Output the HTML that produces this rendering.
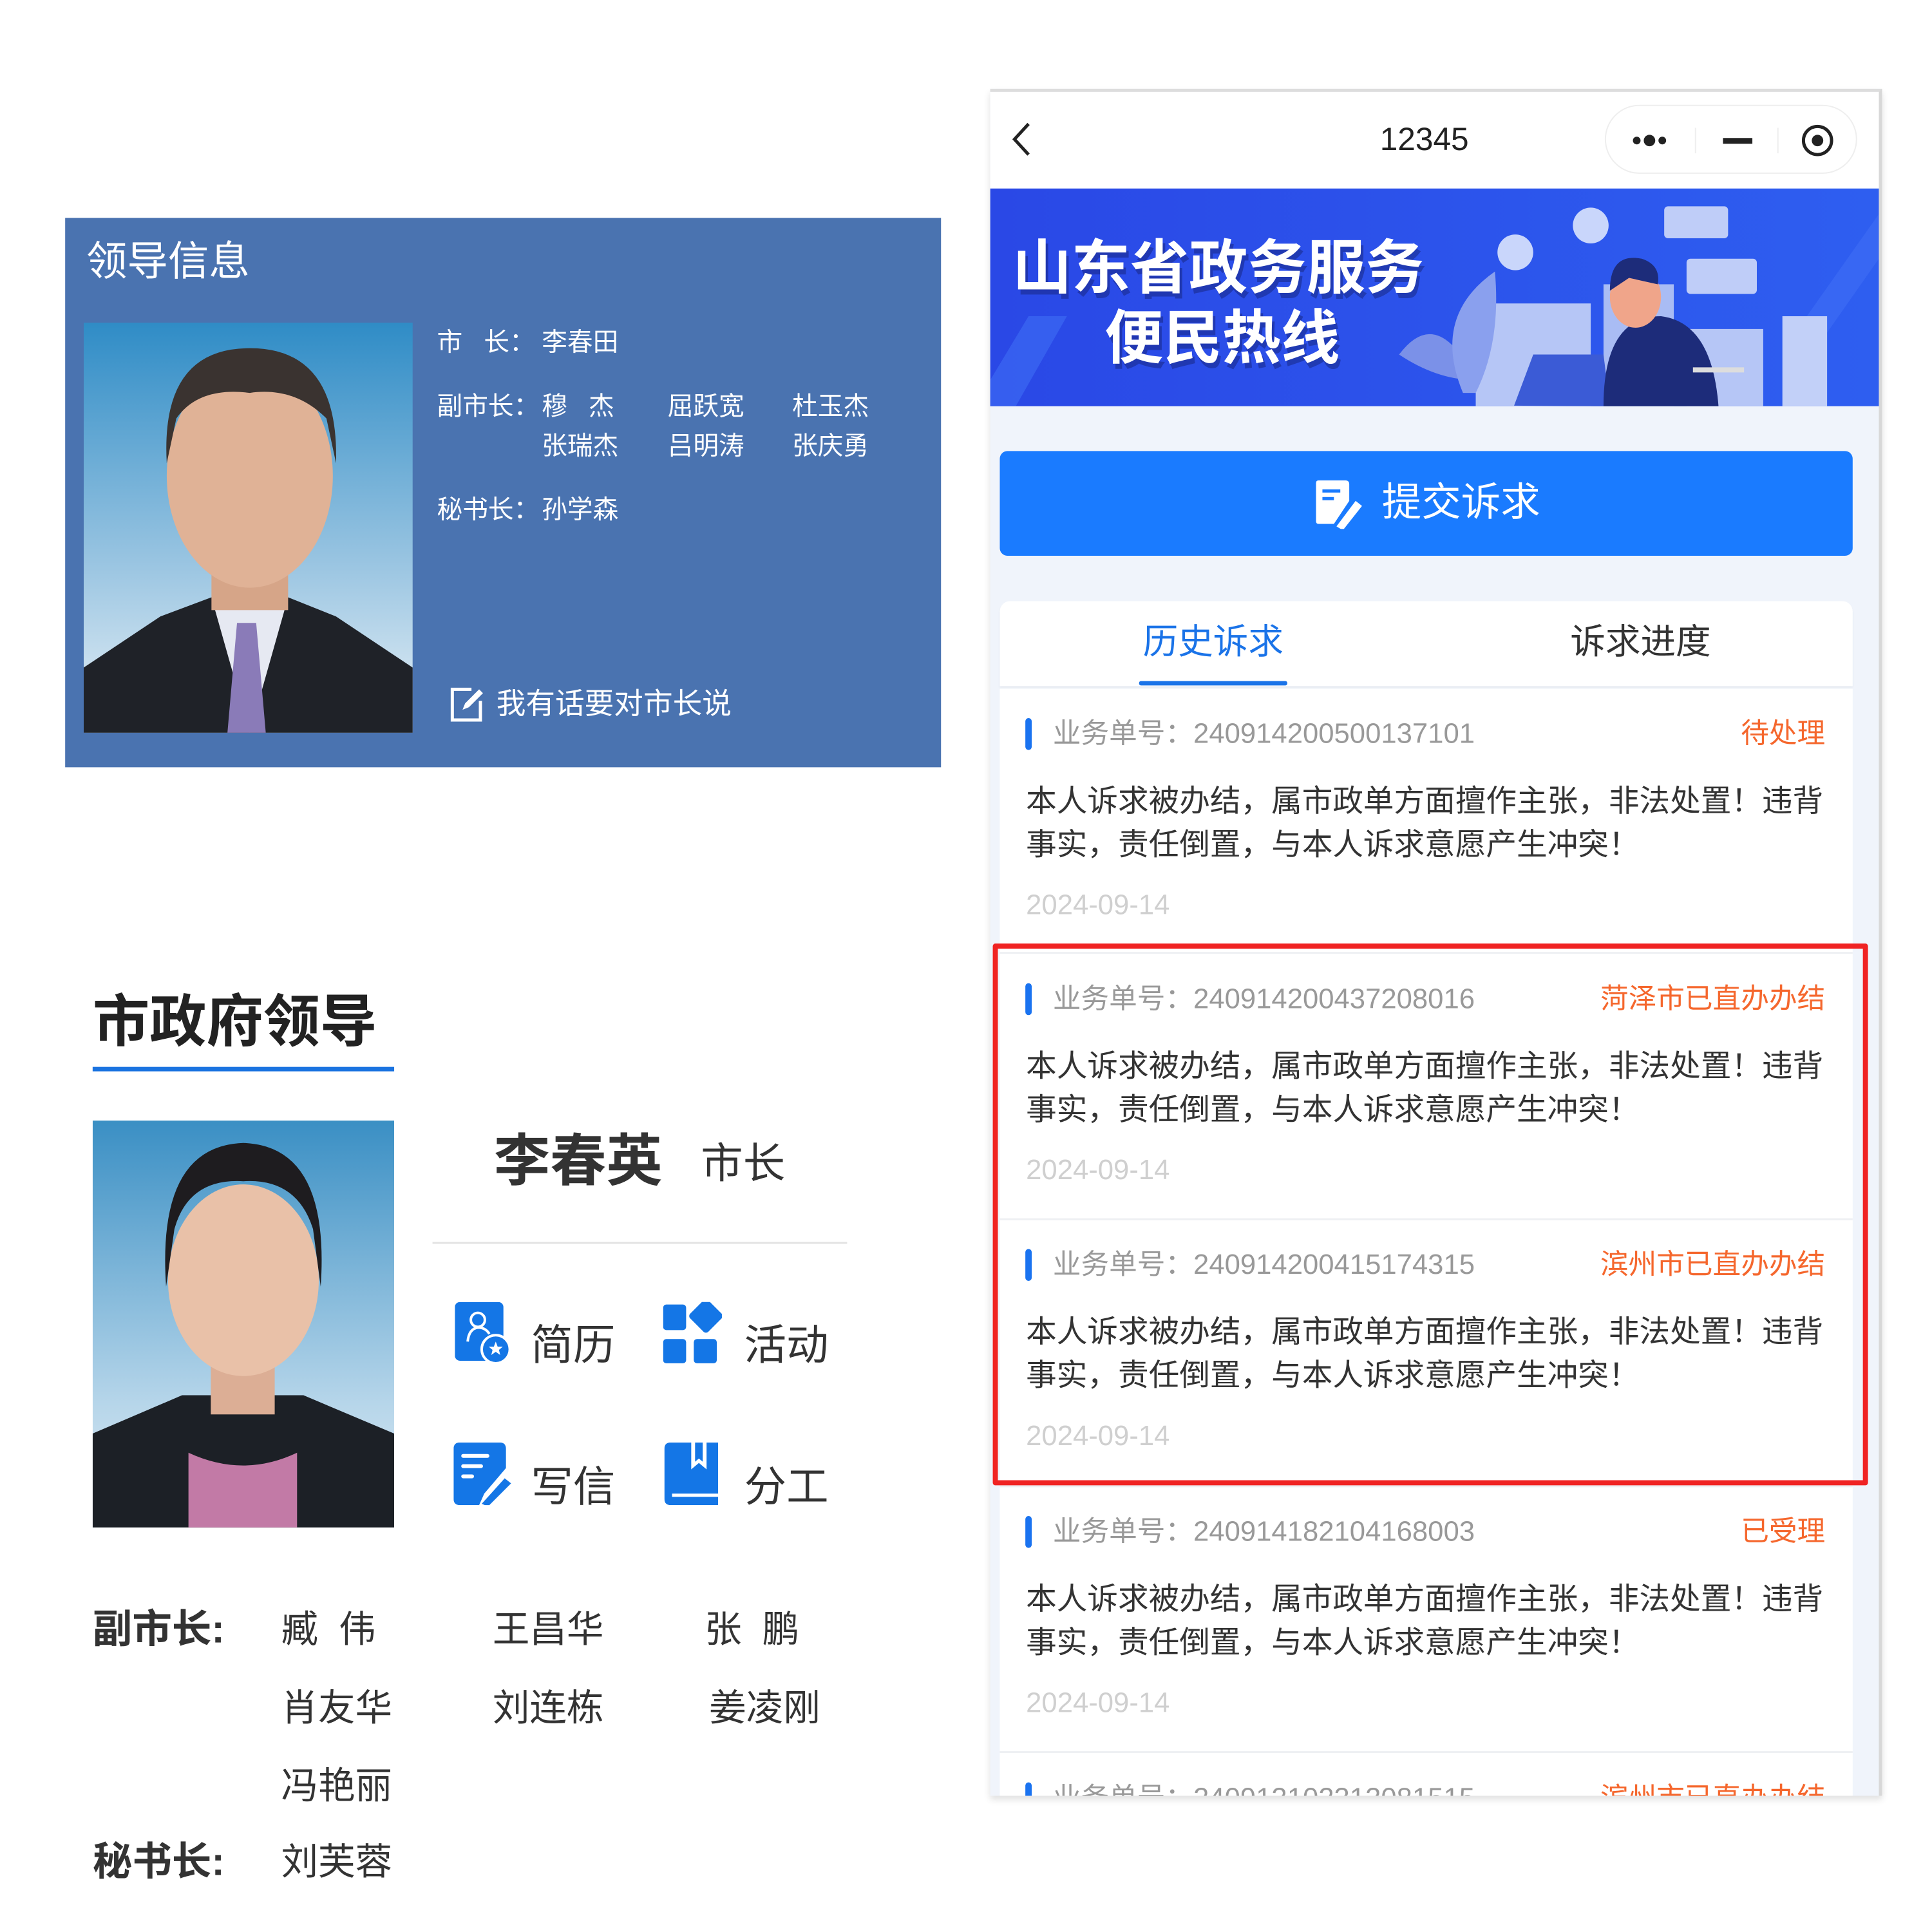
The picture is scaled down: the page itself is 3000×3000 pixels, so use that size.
<!DOCTYPE html>
<html><head><meta charset="utf-8">
<style>
*{margin:0;padding:0;box-sizing:border-box}
body{width:3000px;height:3000px;background:#fff;position:relative;overflow:hidden;font-family:"Liberation Sans","Noto Sans CJK SC",sans-serif}
#root{position:absolute;left:0;top:0;width:3000px;height:3000px;transform:scale(0.992);transform-origin:0 0}
.a{position:absolute;white-space:nowrap;line-height:1}
.w{color:#fff}
.item-h{color:#999;font-size:44px}
.st{color:#f5672d;font-size:44px}
.body{color:#333;font-size:48px;line-height:68px}
.dt{color:#cfcfcf;font-size:44px}
.bar{position:absolute;width:10px;height:50px;background:#1a73f0;border-radius:5px}
</style></head><body><div id="root">

<!-- left blue box -->
<div class="a" style="left:102px;top:341px;width:1371px;height:860px;background:#4a73b0"></div>
<div class="a w" style="left:135px;top:377px;font-size:64px">领导信息</div>
<svg class="a" style="left:131px;top:505px" width="515" height="642" viewBox="0 0 515 642">
<defs><linearGradient id="g1" x1="0" y1="0" x2="0" y2="1"><stop offset="0" stop-color="#2f8cc6"/><stop offset="0.6" stop-color="#9cc6e2"/><stop offset="1" stop-color="#e8f1f7"/></linearGradient></defs>
<rect width="515" height="642" fill="url(#g1)"/>
<path d="M0 540 L120 460 L200 430 L320 430 L395 460 L515 540 L515 642 L0 642Z" fill="#1f2228"/>
<path d="M200 430 L260 642 L320 430Z" fill="#e6e9f2"/>
<path d="M240 470 L270 470 L285 642 L225 642Z" fill="#8a7bb8"/>
<rect x="200" y="330" width="120" height="120" fill="#d6a588"/>
<ellipse cx="260" cy="240" rx="130" ry="175" fill="#e0b296"/>
<path d="M130 220 Q120 40 260 40 Q400 40 395 220 L380 150 Q330 100 260 110 Q180 100 145 150Z" fill="#3a3330"/>
</svg>
<div class="a w" style="left:684px;top:516px;font-size:40px">市&nbsp;&nbsp;&nbsp;长：</div>
<div class="a w" style="left:848px;top:516px;font-size:40px">李春田</div>
<div class="a w" style="left:684px;top:616px;font-size:40px">副市长：</div>
<div class="a w" style="left:848px;top:616px;font-size:40px">穆&nbsp;&nbsp;&nbsp;杰</div>
<div class="a w" style="left:1045px;top:616px;font-size:40px">屈跃宽</div>
<div class="a w" style="left:1240px;top:616px;font-size:40px">杜玉杰</div>
<div class="a w" style="left:848px;top:678px;font-size:40px">张瑞杰</div>
<div class="a w" style="left:1045px;top:678px;font-size:40px">吕明涛</div>
<div class="a w" style="left:1240px;top:678px;font-size:40px">张庆勇</div>
<div class="a w" style="left:684px;top:778px;font-size:40px">秘书长：</div>
<div class="a w" style="left:848px;top:778px;font-size:40px">孙学森</div>
<svg class="a" style="left:700px;top:1071px" width="62" height="62" viewBox="0 0 62 62"><path d="M38 8 H8 V56 H52 V26" fill="none" stroke="#fff" stroke-width="5"/><path d="M24 40 L28 30 L50 8 L56 14 L34 36Z" fill="#fff"/></svg>
<div class="a w" style="left:777px;top:1078px;font-size:46px">我有话要对市长说</div>

<!-- bottom-left -->
<div class="a" style="left:145px;top:1555px;font-size:89px;font-weight:bold;color:#222">市政府领导</div>
<div class="a" style="left:145px;top:1670px;width:472px;height:7px;background:#1a73e0"></div>
<svg class="a" style="left:145px;top:1754px" width="472" height="637" viewBox="0 0 472 637">
<defs><linearGradient id="g2" x1="0" y1="0" x2="0" y2="1"><stop offset="0" stop-color="#3a8fc4"/><stop offset="0.7" stop-color="#b7d6ea"/><stop offset="1" stop-color="#dfeaf3"/></linearGradient></defs>
<rect width="472" height="637" fill="url(#g2)"/>
<path d="M0 490 L140 430 L330 430 L472 490 L472 637 L0 637Z" fill="#1c2026"/>
<path d="M150 520 Q236 560 320 520 L320 637 L150 637Z" fill="#c27aa6"/>
<rect x="185" y="360" width="100" height="100" fill="#dcae95"/>
<ellipse cx="236" cy="250" rx="118" ry="150" fill="#e9c1a8"/>
<path d="M115 260 Q100 40 236 35 Q372 40 357 260 L345 170 Q320 90 236 95 Q150 90 128 170Z" fill="#1e1c1f"/>
</svg>
<div class="a" style="left:773px;top:1774px;font-size:88px;font-weight:bold;color:#333">李春英</div>
<div class="a" style="left:1097px;top:1788px;font-size:66px;color:#333">市长</div>
<div class="a" style="left:677px;top:1944px;width:649px;height:3px;background:#e3e3e3"></div>
<!-- icons -->
<svg class="a" style="left:712px;top:2038px" width="88" height="98" viewBox="0 0 88 98"><rect x="0" y="0" width="76" height="92" rx="8" fill="#1476e6"/><circle cx="36" cy="28" r="11" fill="none" stroke="#fff" stroke-width="4"/><path d="M20 62 Q22 42 36 40 Q48 40 54 50" fill="none" stroke="#fff" stroke-width="4"/><circle cx="64" cy="74" r="22" fill="#1476e6" stroke="#fff" stroke-width="4"/><path d="M64 62 L67 70 L75 70 L69 75 L71 83 L64 78 L57 83 L59 75 L53 70 L61 70Z" fill="#fff"/></svg>
<div class="a" style="left:831px;top:2072px;font-size:66px;color:#333">简历</div>
<svg class="a" style="left:1038px;top:2038px" width="92" height="98" viewBox="0 0 92 98"><rect x="0" y="4" width="36" height="40" rx="5" fill="#1476e6"/><rect x="47" y="2" width="40" height="40" rx="5" transform="rotate(45 67 22)" fill="#1476e6"/><rect x="0" y="58" width="36" height="38" rx="5" fill="#1476e6"/><rect x="48" y="58" width="36" height="38" rx="5" fill="#1476e6"/></svg>
<div class="a" style="left:1165px;top:2072px;font-size:66px;color:#333">活动</div>
<svg class="a" style="left:710px;top:2258px" width="92" height="98" viewBox="0 0 92 98"><path d="M10 0 H72 Q82 0 82 10 V40 L48 80 L40 98 H10 Q0 98 0 88 V10 Q0 0 10 0Z" fill="#1476e6"/><rect x="12" y="18" width="44" height="6" rx="3" fill="#fff"/><rect x="12" y="34" width="34" height="6" rx="3" fill="#fff"/><rect x="12" y="50" width="20" height="6" rx="3" fill="#fff"/><path d="M44 96 L80 56 L90 64 L54 100Z" fill="#1476e6"/></svg>
<div class="a" style="left:831px;top:2294px;font-size:66px;color:#333">写信</div>
<svg class="a" style="left:1040px;top:2258px" width="90" height="98" viewBox="0 0 90 98"><path d="M10 0 H42 V42 L54 32 L66 42 V0 H84 V98 H10 Q0 98 0 88 V10 Q0 0 10 0Z" fill="#1476e6"/><path d="M48 0 H60 V30 L54 25 L48 30Z" fill="#1476e6"/><rect x="12" y="80" width="72" height="5" fill="#fff"/></svg>
<div class="a" style="left:1165px;top:2294px;font-size:66px;color:#333">分工</div>

<div class="a" style="left:145px;top:2520px;font-size:62px;font-weight:bold;color:#333">副市长:</div>
<div class="a" style="left:440px;top:2522px;font-size:58px;color:#333">臧&nbsp;&nbsp;伟</div>
<div class="a" style="left:771px;top:2522px;font-size:58px;color:#333">王昌华</div>
<div class="a" style="left:1103px;top:2522px;font-size:58px;color:#333">张&nbsp;&nbsp;鹏</div>
<div class="a" style="left:440px;top:2645px;font-size:58px;color:#333">肖友华</div>
<div class="a" style="left:771px;top:2645px;font-size:58px;color:#333">刘连栋</div>
<div class="a" style="left:1110px;top:2645px;font-size:58px;color:#333">姜凌刚</div>
<div class="a" style="left:440px;top:2767px;font-size:58px;color:#333">冯艳丽</div>
<div class="a" style="left:145px;top:2884px;font-size:62px;font-weight:bold;color:#333">秘书长:</div>
<div class="a" style="left:440px;top:2886px;font-size:58px;color:#333">刘芙蓉</div>

<!-- phone -->
<div class="a" style="left:1550px;top:139px;width:1396px;height:2672px;background:#f0f4fb;border-top:5px solid #ddd;border-right:5px solid #d8d8d8;box-shadow:0 6px 10px rgba(0,0,0,0.12)"></div>
<div class="a" style="left:1550px;top:144px;width:1391px;height:151px;background:#fff"></div>
<svg class="a" style="left:1582px;top:190px" width="36" height="56" viewBox="0 0 36 56"><path d="M28 4 L6 28 L28 52" fill="none" stroke="#222" stroke-width="5"/></svg>
<div class="a" style="left:2160px;top:193px;font-size:50px;color:#222">12345</div>
<div class="a" style="left:2512px;top:164px;width:395px;height:108px;border:2px solid #eee;border-radius:54px;background:#fff"></div>
<svg class="a" style="left:2552px;top:195px" width="340" height="50" viewBox="0 0 340 50"><circle cx="10" cy="25" r="6" fill="#222"/><circle cx="30" cy="25" r="9" fill="#222"/><circle cx="50" cy="25" r="6" fill="#222"/><rect x="101" y="5" width="2" height="40" fill="#eee"/><rect x="145" y="21" width="46" height="9" fill="#222"/><rect x="230" y="5" width="2" height="40" fill="#eee"/><circle cx="293" cy="25" r="22" fill="none" stroke="#222" stroke-width="5"/><circle cx="293" cy="25" r="9" fill="#222"/></svg>
<!-- banner -->
<svg class="a" style="left:1550px;top:295px" width="1391" height="341" viewBox="0 0 1391 341" preserveAspectRatio="none">
<defs><linearGradient id="g3" x1="0" y1="0" x2="1" y2="0"><stop offset="0" stop-color="#2a48e6"/><stop offset="1" stop-color="#2e5ef0"/></linearGradient></defs>
<rect width="1391" height="341" fill="url(#g3)"/>
<path d="M0 300 L60 200 L120 200 L40 341 L0 341Z" fill="#3f6ef5" opacity="0.6"/>
<path d="M1250 240 L1391 40 L1391 110 L1300 240Z" fill="#3f6ef5" opacity="0.6"/>
<rect x="760" y="180" width="180" height="161" fill="#b6c6f6"/>
<rect x="960" y="150" width="110" height="191" fill="#a9bcf4"/>
<rect x="1090" y="220" width="120" height="121" fill="#b6c6f6"/>
<rect x="1240" y="200" width="70" height="141" fill="#c2d0f8"/>
<circle cx="822" cy="100" r="28" fill="#c9d6fb"/>
<circle cx="940" cy="58" r="28" fill="#c9d6fb"/>
<rect x="1055" y="28" width="100" height="50" rx="6" fill="#bfcdf8"/>
<rect x="1090" y="110" width="110" height="55" rx="6" fill="#bfcdf8"/>
<path d="M640 260 Q700 180 760 300 Q700 300 640 260Z" fill="#7b91e8"/>
<path d="M740 320 Q690 200 790 130 Q800 240 760 320Z" fill="#8aa0ee"/>
<path d="M820 340 L850 260 L960 260 L970 341Z" fill="#3b5bd6"/>
<path d="M960 341 Q960 200 1050 200 Q1130 210 1140 341Z" fill="#1d2c7a"/>
<ellipse cx="1010" cy="170" rx="40" ry="48" fill="#f0a58a"/>
<path d="M970 160 Q970 100 1020 110 Q1050 120 1045 150 L1000 140Z" fill="#1d2c7a"/>
<rect x="1100" y="280" width="80" height="8" fill="#ddd"/>
</svg>
<div class="a" style="left:1585px;top:374px;font-size:92px;font-weight:bold;color:#fff;text-shadow:4px 8px 0 rgba(20,30,110,0.45)">山东省政务服务</div>
<div class="a" style="left:1729px;top:484px;font-size:92px;font-weight:bold;color:#fff;text-shadow:4px 8px 0 rgba(20,30,110,0.45)">便民热线</div>
<!-- button -->
<div class="a" style="left:1565px;top:706px;width:1335px;height:164px;background:#1a7bff;border-radius:12px"></div>
<svg class="a" style="left:2058px;top:748px" width="80" height="80" viewBox="0 0 80 80"><path d="M6 4 H48 Q54 4 54 10 V36 L30 72 H6 Q2 72 2 68 V8 Q2 4 6 4Z" fill="#fff"/><rect x="12" y="18" width="28" height="5" fill="#1a7bff"/><rect x="12" y="30" width="18" height="5" fill="#1a7bff"/><path d="M34 76 L64 36 L74 44 L44 82Z" fill="#fff"/></svg>
<div class="a w" style="left:2163px;top:756px;font-size:62px">提交诉求</div>
<!-- tabs -->
<div class="a" style="left:1565px;top:941px;width:1335px;height:133px;background:#fff;border-radius:16px 16px 0 0;box-shadow:0 3px 4px rgba(0,0,0,0.04)"></div>
<div class="a" style="left:1789px;top:977px;font-size:55px;color:#1a73e8">历史诉求</div>
<div class="a" style="left:1783px;top:1066px;width:232px;height:7px;background:#1a73e8;border-radius:3px"></div>
<div class="a" style="left:2458px;top:977px;font-size:55px;color:#333">诉求进度</div>

<!-- items -->
<div class="a" style="left:1565px;top:1078px;width:1335px;height:1733px;background:#fff"></div>
<div class="a" style="left:1565px;top:1490px;width:1335px;height:3px;background:#eef0f3"></div>
<div class="a" style="left:1565px;top:1907px;width:1335px;height:3px;background:#eef0f3"></div>
<div class="a" style="left:1565px;top:2325px;width:1335px;height:3px;background:#eef0f3"></div>
<div class="a" style="left:1565px;top:2741px;width:1335px;height:3px;background:#eef0f3"></div>

<div class="bar" style="left:1605px;top:1124px"></div>
<div class="a item-h" style="left:1648px;top:1127px">业务单号：240914200500137101</div>
<div class="a st" style="left:2725px;top:1127px">待处理</div>
<div class="a body" style="left:1606px;top:1221px">本人诉求被办结，属市政单方面擅作主张，非法处置！违背<br>事实，责任倒置，与本人诉求意愿产生冲突！</div>
<div class="a dt" style="left:1606px;top:1395px">2024-09-14</div>

<div class="bar" style="left:1605px;top:1539px"></div>
<div class="a item-h" style="left:1648px;top:1542px">业务单号：240914200437208016</div>
<div class="a st" style="left:2505px;top:1542px">菏泽市已直办办结</div>
<div class="a body" style="left:1606px;top:1636px">本人诉求被办结，属市政单方面擅作主张，非法处置！违背<br>事实，责任倒置，与本人诉求意愿产生冲突！</div>
<div class="a dt" style="left:1606px;top:1810px">2024-09-14</div>

<div class="bar" style="left:1605px;top:1955px"></div>
<div class="a item-h" style="left:1648px;top:1958px">业务单号：240914200415174315</div>
<div class="a st" style="left:2505px;top:1958px">滨州市已直办办结</div>
<div class="a body" style="left:1606px;top:2052px">本人诉求被办结，属市政单方面擅作主张，非法处置！违背<br>事实，责任倒置，与本人诉求意愿产生冲突！</div>
<div class="a dt" style="left:1606px;top:2226px">2024-09-14</div>

<div class="bar" style="left:1605px;top:2373px"></div>
<div class="a item-h" style="left:1648px;top:2376px">业务单号：240914182104168003</div>
<div class="a st" style="left:2725px;top:2376px">已受理</div>
<div class="a body" style="left:1606px;top:2470px">本人诉求被办结，属市政单方面擅作主张，非法处置！违背<br>事实，责任倒置，与本人诉求意愿产生冲突！</div>
<div class="a dt" style="left:1606px;top:2644px">2024-09-14</div>

<div style="position:absolute;left:1550px;top:2770px;width:1375px;height:41px;overflow:hidden">
<div class="bar" style="left:55px;top:20px"></div>
<div class="a item-h" style="left:98px;top:23px">业务单号：240913102313081515</div>
<div class="a st" style="left:955px;top:23px">滨州市已直办办结</div>
</div>

<!-- red box -->
<div class="a" style="left:1554px;top:1477px;width:1370px;height:848px;border:8px solid #f02323;border-radius:4px"></div>
</div></body></html>
